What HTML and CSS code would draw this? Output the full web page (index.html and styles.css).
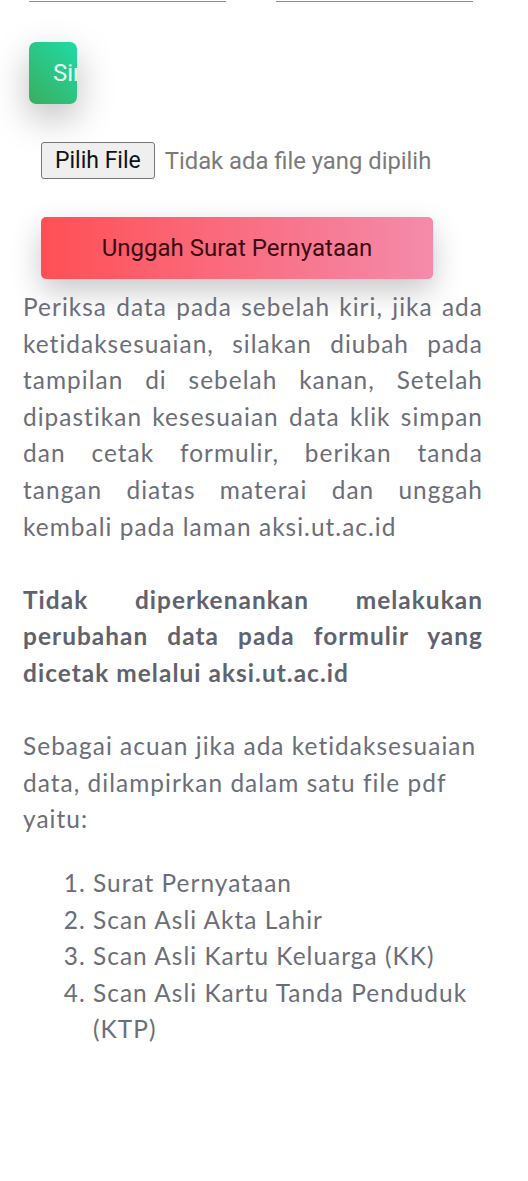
FILE: index.html
```html
<!DOCTYPE html>
<html lang="id">
<head>
    <meta charset="UTF-8">
    <meta name="viewport" content="width=device-width, initial-scale=1.0">
    <title>Surat Pernyataan</title>
    <link rel="stylesheet" href="styles.css">
</head>
<body>
    <div class="page">
        <div class="field-row">
            <div class="field-line"></div>
            <div class="field-line"></div>
        </div>

        <button class="btn btn-save" type="button">Simpan</button>

        <div class="file-row">
            <span class="file-btn">Pilih File</span>
            <span class="file-name">Tidak ada file yang dipilih</span>
        </div>

        <button class="btn btn-upload" type="button">Unggah Surat Pernyataan</button>

        <div class="info">
            <p class="justify">
                Periksa data pada sebelah kiri, jika ada ketidaksesuaian, silakan diubah pada tampilan di sebelah kanan, Setelah dipastikan kesesuaian data klik simpan dan cetak formulir, berikan tanda tangan diatas materai dan unggah kembali pada laman aksi.ut.ac.id
            </p>
            <p class="justify strong">
                Tidak diperkenankan melakukan perubahan data pada formulir yang dicetak melalui aksi.ut.ac.id
            </p>
            <p>
                Sebagai acuan jika ada ketidaksesuaian data, dilampirkan dalam satu file pdf yaitu:
            </p>
            <ol class="doc-list">
                <li>Surat Pernyataan</li>
                <li>Scan Asli Akta Lahir</li>
                <li>Scan Asli Kartu Keluarga (KK)</li>
                <li>Scan Asli Kartu Tanda Penduduk (KTP)</li>
            </ol>
        </div>
    </div>
</body>
</html>
```

FILE: styles.css
```css
:root {
    --text: #6b6e79;
    --text-strong: #60636e;
    --line: #8c8c8c;
}

* {
    margin: 0;
    padding: 0;
    box-sizing: border-box;
}

body {
    font-family: Lato, "Open Sans", sans-serif;
    background: #fff;
    color: var(--text);
    min-height: 100vh;
}

.page {
    width: 528px;
    padding: 0 45px 0 23px;
}

.field-row {
    display: flex;
    gap: 50px;
    padding: 1px 0 0 6px;
}

.field-line {
    width: 197px;
    height: 1px;
    background: var(--line);
}

.btn {
    display: block;
    border: none;
    font-family: Roboto, "Liberation Sans", sans-serif;
    font-size: 24px;
    cursor: pointer;
}

.btn-save {
    width: 48px;
    height: 62px;
    margin: 40px 0 0 6px;
    padding: 0 0 0 24px;
    overflow: hidden;
    white-space: nowrap;
    text-align: left;
    color: #e8fff2;
    border-radius: 7px;
    background: linear-gradient(45deg, #3aae5f, #1fdba6);
    box-shadow: 0 14px 36px rgba(0, 0, 0, 0.26);
}

.file-row {
    display: flex;
    align-items: center;
    gap: 10px;
    margin: 38px 0 0 18px;
}

.file-btn {
    display: inline-block;
    height: 37px;
    padding: 0 13px;
    line-height: 35px;
    font-family: Roboto, "Liberation Sans", sans-serif;
    font-size: 23px;
    color: #111;
    background: #efefef;
    border: 1px solid #767676;
    border-radius: 3px;
}

.file-name {
    font-family: Roboto, "Liberation Sans", sans-serif;
    font-size: 23.8px;
    color: #7a7a7a;
}

.btn-upload {
    width: 392px;
    height: 62px;
    margin: 38px 0 0 18px;
    color: #3a0b12;
    border-radius: 5px;
    background: linear-gradient(90deg, #ff4f55, #f48bab);
    box-shadow: 0 12px 30px rgba(0, 0, 0, 0.22);
}

.info {
    margin-top: 10px;
    font-size: 24.4px;
    line-height: 36.6px;
    letter-spacing: 1.05px;
}

.info p + p {
    margin-top: 36.6px;
}

.justify {
    text-align: justify;
}

.strong {
    font-weight: 700;
    color: var(--text-strong);
}

.doc-list {
    margin-top: 27px;
    padding-left: 70px;
}
```
